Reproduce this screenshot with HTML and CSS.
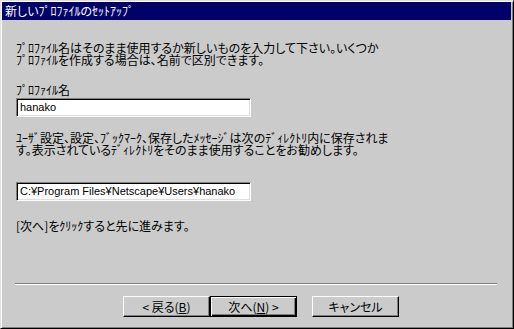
FILE: index.html
```html
<!DOCTYPE html>
<html lang="ja">
<head>
<meta charset="utf-8">
<link rel="stylesheet" href="styles.css">
</head>
<body>
<div class="window">
  <div class="titlebar">新しいﾌﾟﾛﾌｧｲﾙのｾｯﾄｱｯﾌﾟ</div>
  <div class="content">
    <p class="para">ﾌﾟﾛﾌｧｲﾙ名はそのまま使用するか新しいものを入力して下さい。いくつか<br>ﾌﾟﾛﾌｧｲﾙを作成する場合は、名前で区別できます。</p>
    <div class="label">ﾌﾟﾛﾌｧｲﾙ名</div>
    <div class="field field-name">hanako</div>
    <p class="para para2">ﾕｰｻﾞ設定、設定、ﾌﾞｯｸﾏｰｸ、保存したﾒｯｾｰｼﾞは次のﾃﾞｨﾚｸﾄﾘ内に保存されま<br>す。表示されているﾃﾞｨﾚｸﾄﾘをそのまま使用することをお勧めします。</p>
    <div class="field field-dir">C:¥Program Files¥Netscape¥Users¥hanako</div>
    <p class="para para3">[次へ]をｸﾘｯｸすると先に進みます。</p>
    <div class="separator"></div>
    <div class="buttons">
      <div class="btn">&lt; 戻る(<u>B</u>)</div>
      <div class="btn btn-default">次へ(<u>N</u>) &gt;</div>
      <div class="btn btn-cancel">キャンセル</div>
    </div>
  </div>
</div>
</body>
</html>
```

FILE: styles.css
```css
html, body {
  margin: 0;
  padding: 0;
  background: #c0c0c0;
}
body {
  font-family: "Noto Sans CJK JP", "Liberation Sans", sans-serif;
  font-size: 12px;
  font-feature-settings: "palt";
  color: #000;
}
.window {
  box-sizing: border-box;
  width: 514px;
  height: 329px;
  background: #cbcbcb;
  border-top: 1px solid #dfdfdf;
  border-left: 1px solid #dfdfdf;
  border-right: 1px solid #000;
  border-bottom: 1px solid #000;
  box-shadow: inset 1px 1px 0 #fff, inset -1px -1px 0 #808080;
  padding: 1px 2px 0 1px;
  display: flex;
  flex-direction: column;
}
.titlebar {
  height: 18px;
  line-height: 18px;
  background: #000068;
  color: #fff;
  padding-left: 3px;
  white-space: nowrap;
}
.content {
  padding: 22px 0 0 14px;
  display: flex;
  flex-direction: column;
  align-items: flex-start;
}
.para {
  margin: 0;
  line-height: 12px;
  white-space: nowrap;
}
.label {
  margin-top: 18px;
  line-height: 12px;
}
.field {
  box-sizing: border-box;
  width: 235px;
  height: 19px;
  background: #fff;
  border-top: 1px solid #808080;
  border-left: 1px solid #808080;
  border-right: 1px solid #fff;
  border-bottom: 1px solid #fff;
  box-shadow: inset 1px 1px 0 #000, inset -1px -1px 0 #dfdfdf;
  padding-left: 3px;
  line-height: 17px;
  white-space: nowrap;
  overflow: hidden;
  font-family: "Liberation Sans", "Noto Sans CJK JP", sans-serif;
  font-size: 11px;
}
.field-name {
  margin-top: 2px;
}
.para2 {
  margin-top: 15px;
}
.field-dir {
  margin-top: 26px;
}
.para3 {
  margin-top: 19px;
}
.separator {
  margin-top: 51px;
  margin-left: -1px;
  width: 482px;
  height: 1px;
  background: #808080;
  border-bottom: 1px solid #fff;
}
.buttons {
  margin-top: 11px;
  margin-left: 107px;
  display: flex;
}
.btn {
  box-sizing: border-box;
  width: 87px;
  height: 21px;
  background: #cbcbcb;
  border-top: 1px solid #fff;
  border-left: 1px solid #fff;
  border-right: 1px solid #000;
  border-bottom: 1px solid #000;
  box-shadow: inset -1px -1px 0 #808080;
  display: flex;
  align-items: center;
  justify-content: center;
  line-height: 12px;
  white-space: nowrap;
}
.btn-default {
  border: 1px solid #000;
  box-shadow: inset 1px 1px 0 #fff, inset -1px -1px 0 #000, inset -2px -2px 0 #808080;
}
.btn-cancel {
  margin-left: 15px;
}
```
